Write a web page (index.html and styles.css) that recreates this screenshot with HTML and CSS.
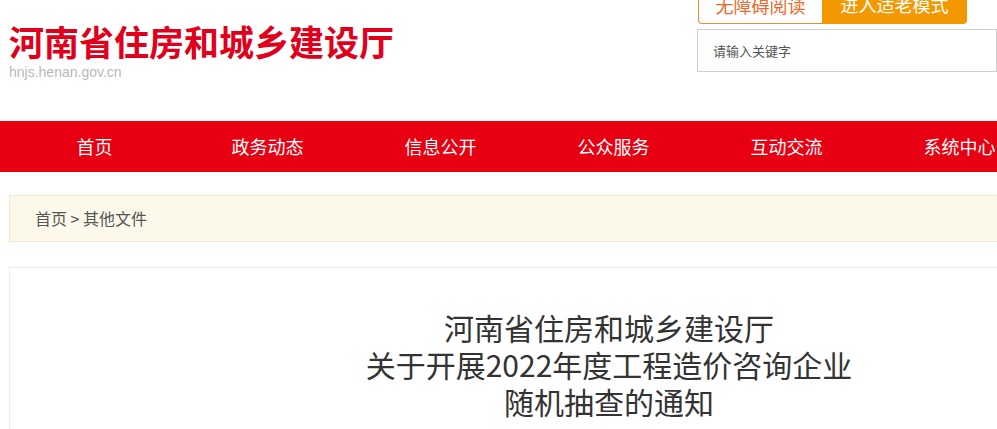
FILE: index.html
```html
<!DOCTYPE html>
<html lang="zh-CN">
<head>
    <meta charset="UTF-8">
    <meta name="viewport" content="width=device-width, initial-scale=1.0">
    <title>河南省住房和城乡建设厅</title>
    <link rel="stylesheet" href="styles.css">
</head>
<body>
    <header class="top">
        <div class="logo">
            <h1 class="logo-name">河南省住房和城乡建设厅</h1>
            <p class="logo-url">hnjs.henan.gov.cn</p>
        </div>
        <div class="top-right">
            <div class="mode-btns">
                <a class="mode-btn mode-read" href="#">无障碍阅读</a>
                <a class="mode-btn mode-old" href="#">进入适老模式</a>
            </div>
            <div class="search">
                <input class="search-input" type="text" placeholder="请输入关键字">
            </div>
        </div>
    </header>

    <nav class="nav">
        <ul class="nav-list">
            <li><a href="#">首页</a></li>
            <li><a href="#">政务动态</a></li>
            <li><a href="#">信息公开</a></li>
            <li><a href="#">公众服务</a></li>
            <li><a href="#">互动交流</a></li>
            <li><a href="#">系统中心</a></li>
            <li><a href="#">专题专栏</a></li>
        </ul>
    </nav>

    <div class="wrap">
        <div class="crumb">
            <a href="#">首页</a> &gt; <a href="#">其他文件</a>
        </div>

        <div class="article">
            <h2 class="article-title">河南省住房和城乡建设厅<br>关于开展2022年度工程造价咨询企业<br>随机抽查的通知</h2>
        </div>
    </div>
</body>
</html>
```

FILE: styles.css
```css
body {
    margin: 0;
    font-family: "Noto Sans CJK SC", "Liberation Sans", sans-serif;
    background-color: #fff;
    overflow: hidden;
}

a {
    color: inherit;
    text-decoration: none;
}

.top {
    display: flex;
    justify-content: space-between;
    width: 988px;
    height: 121px;
    padding-left: 9px;
}

.logo-name {
    margin: 20px 0 0;
    font-size: 35px;
    line-height: 42px;
    font-weight: 700;
    color: #e0001b;
}

.logo-url {
    margin: 2px 0 0;
    font-family: "Liberation Sans", Arial, sans-serif;
    font-size: 14px;
    line-height: 16px;
    color: #b9b9b9;
}

.top-right {
    width: 300px;
}

.mode-btns {
    display: flex;
    margin-top: -16px;
    margin-left: 1px;
}

.mode-btn {
    display: block;
    height: 40px;
    line-height: 40px;
    font-size: 18px;
    text-align: center;
    box-sizing: border-box;
}

.mode-read {
    width: 124px;
    border: 1px solid #ef8a3c;
    border-right: none;
    border-radius: 0 0 0 4px;
    color: #ea6a2a;
    background-color: #fff;
}

.mode-old {
    width: 145px;
    border-radius: 0 0 4px 0;
    background-color: #f39800;
    color: #fff;
}

.search {
    margin-top: 5px;
}

.search-input {
    display: block;
    width: 300px;
    height: 43px;
    box-sizing: border-box;
    border: 1px solid #cfcfcf;
    padding: 0 15px;
    font-family: "Noto Sans CJK SC", sans-serif;
    font-size: 13px;
    outline: none;
}

.search-input::placeholder {
    color: #555;
}

.nav {
    width: 1220px;
    height: 51px;
    background-color: #e60012;
}

.nav-list {
    display: flex;
    margin: 0;
    padding: 0 0 0 8px;
    list-style: none;
}

.nav-list li {
    width: 173px;
    text-align: center;
    font-size: 18px;
    line-height: 51px;
    color: #fff;
}

.wrap {
    width: 1200px;
    margin-left: 9px;
}

.crumb {
    margin-top: 23px;
    height: 47px;
    box-sizing: border-box;
    padding-left: 25px;
    border: 1px solid #efe9d2;
    background-color: #fdf9ea;
    font-size: 16px;
    line-height: 45px;
    color: #555;
}

.article {
    margin-top: 25px;
    border: 1px solid #ececec;
    padding-top: 41px;
    min-height: 400px;
}

.article-title {
    margin: 0;
    text-align: center;
    font-size: 30px;
    line-height: 37px;
    font-weight: 400;
    color: #333;
}
```
